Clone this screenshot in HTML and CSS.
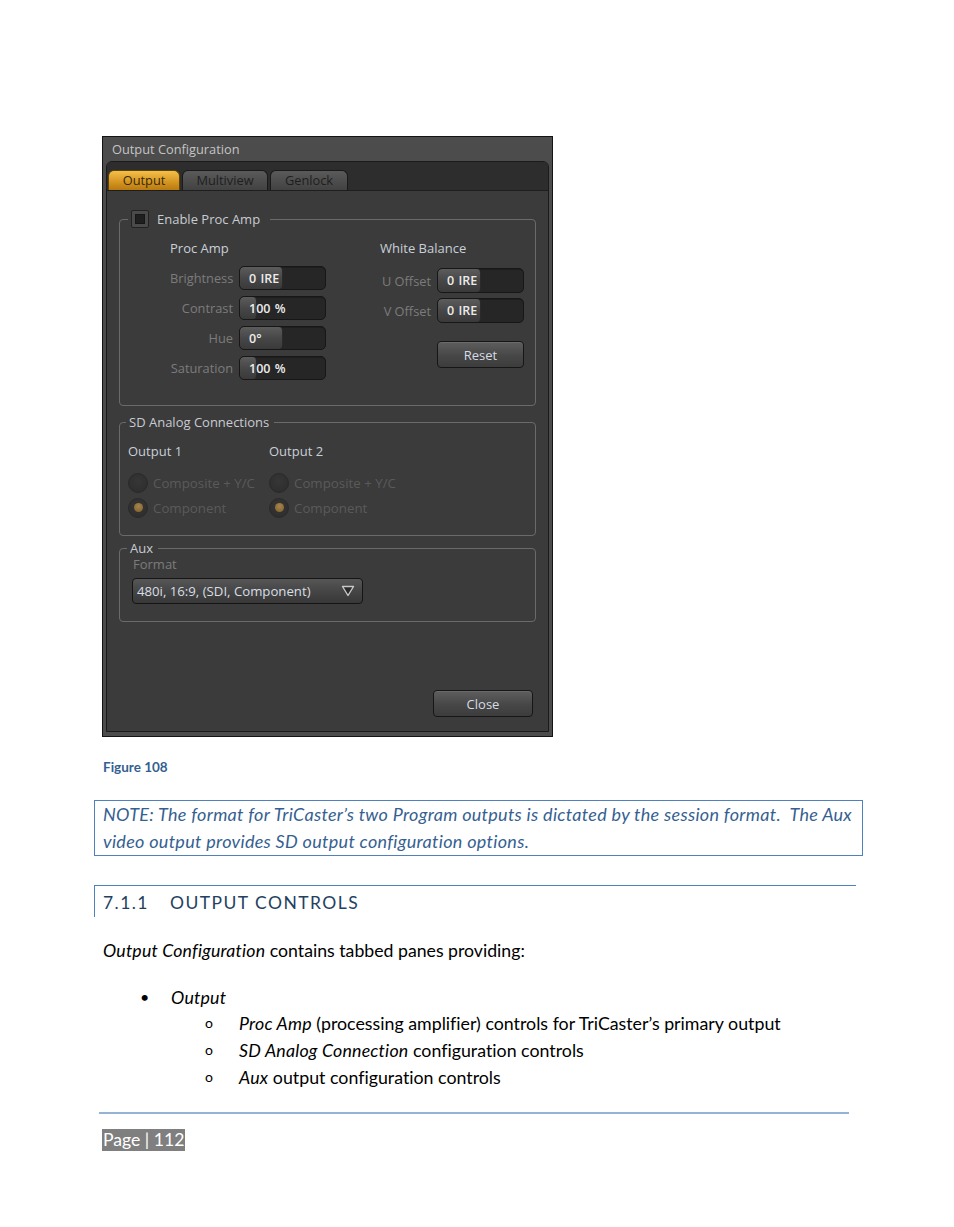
FILE: index.html
```html
<!DOCTYPE html>
<html>
<head>
<meta charset="utf-8">
<link rel="stylesheet" href="styles.css">
</head>
<body>
<div class="page">
  <div class="dialog">
    <div class="dlg-title">Output Configuration</div>
    <div class="panel">
      <div class="tabbar">
        <div class="tab tab-output active">Output</div>
        <div class="tab tab-multi">Multiview</div>
        <div class="tab tab-gen">Genlock</div>
      </div>
      <div class="content">
        <div class="group g1">
          <div class="legend lg1"><span class="check"><span class="check-in"></span></span><span>Enable Proc Amp</span></div>
          <div class="g1-body">
            <div class="col col-left">
              <div class="colhead">Proc Amp</div>
              <div class="rows rows-left">
                <div class="row"><span class="lbl lbl-left">Brightness</span><div class="slider"><div class="fill" style="width:50%"></div><span class="val">0 IRE</span></div></div>
                <div class="row"><span class="lbl lbl-left">Contrast</span><div class="slider"><div class="fill" style="width:20%"></div><span class="val">100 %</span></div></div>
                <div class="row"><span class="lbl lbl-left">Hue</span><div class="slider"><div class="fill" style="width:50%"></div><span class="val">0°</span></div></div>
                <div class="row"><span class="lbl lbl-left">Saturation</span><div class="slider"><div class="fill" style="width:20%"></div><span class="val">100 %</span></div></div>
              </div>
            </div>
            <div class="col col-right">
              <div class="colhead">White Balance</div>
              <div class="rows rows-right">
                <div class="row row-r"><span class="lbl lbl-right">U Offset</span><div class="slider"><div class="fill" style="width:50%"></div><span class="val">0 IRE</span></div></div>
                <div class="row row-r"><span class="lbl lbl-right">V Offset</span><div class="slider"><div class="fill" style="width:50%"></div><span class="val">0 IRE</span></div></div>
              </div>
              <div class="reset-row"><div class="btn btn-reset">Reset</div></div>
            </div>
          </div>
        </div>

        <div class="group g2">
          <div class="legend lg2">SD Analog Connections</div>
          <div class="g2-body">
            <div class="outcol oc1">
              <div class="colhead">Output 1</div>
              <div class="radio-row"><span class="radio"></span><span class="rtext">Composite + Y/C</span></div>
              <div class="radio-row"><span class="radio on"><span class="dot"></span></span><span class="rtext">Component</span></div>
            </div>
            <div class="outcol oc2">
              <div class="colhead">Output 2</div>
              <div class="radio-row"><span class="radio"></span><span class="rtext">Composite + Y/C</span></div>
              <div class="radio-row"><span class="radio on"><span class="dot"></span></span><span class="rtext">Component</span></div>
            </div>
          </div>
        </div>

        <div class="group g3">
          <div class="legend lg3">Aux</div>
          <div class="fmt-label">Format</div>
          <div class="dropdown"><span class="dd-text">480i, 16:9, (SDI, Component)</span><svg class="dd-arrow" width="14" height="12" viewBox="0 0 14 12"><path d="M1.5 1.5 L12.5 1.5 L7 10.5 Z" fill="#2a2a2a" stroke="#c9c9c9" stroke-width="1.4" stroke-linejoin="round"/></svg></div>
        </div>

        <div class="spacer"></div>
        <div class="close-row"><div class="btn btn-close">Close</div></div>
      </div>
    </div>
  </div>

  <div class="caption">Figure 108</div>

  <div class="note">NOTE: The format for TriCaster’s two Program outputs is dictated by the session format.&nbsp; The Aux<br>video output provides SD output configuration options.</div>

  <h3 class="heading"><span class="hnum">7.1.1</span><span class="htext">OUTPUT CONTROLS</span></h3>

  <p class="para"><em>Output Configuration</em> contains tabbed panes providing:</p>

  <div class="list">
    <div class="li li1"><span class="bullet">•</span><em>Output</em></div>
    <div class="li li2"><span class="sub">o</span><span><em>Proc Amp</em> (processing amplifier) controls for TriCaster’s primary output</span></div>
    <div class="li li2"><span class="sub">o</span><span><em>SD Analog Connection</em> configuration controls</span></div>
    <div class="li li2"><span class="sub">o</span><span><em>Aux</em> output configuration controls</span></div>
  </div>

  <div class="footer-line"></div>
  <div class="pagebox">Page | 112</div>
</div>
</body>
</html>
```

FILE: styles.css
```css
* { box-sizing: border-box; }
body { margin: 0; background: #ffffff; font-family: Lato, "Liberation Sans", sans-serif; font-variant-ligatures: none; }
.page { width: 954px; height: 1227px; overflow: hidden; padding-top: 136px; }

/* ---------- dialog ---------- */
.dialog {
  margin-left: 102px;
  width: 451px;
  height: 601px;
  border: 1px solid #141414;
  background: #4c4c4c;
  padding: 0 3px 4px 3px;
  display: flex;
  flex-direction: column;
  font-family: "Open Sans", "Noto Sans", sans-serif;
  font-size: 13px;
}
.dlg-title {
  height: 24px;
  line-height: 25px;
  padding-left: 6px;
  color: #c4c4c4;
  font-size: 12.8px;
}
.panel {
  height: 571px;
  border: 1px solid #1b1b1b;
  border-radius: 6px 6px 0 0;
  background: #3b3b3b;
  display: flex;
  flex-direction: column;
}
.tabbar {
  height: 29px;
  flex: none;
  background: #2d2d2d;
  border-radius: 5px 5px 0 0;
  border-bottom: 1px solid #1e1e1e;
  display: flex;
  align-items: flex-end;
  padding-left: 1px;
  gap: 2px;
}
.tab {
  height: 20px;
  line-height: 19px;
  text-align: center;
  border: 1px solid #1a1a1a;
  border-bottom: none;
  border-radius: 6px 6px 0 0;
  background: linear-gradient(#5a5a5a, #424242);
  color: #1e1e1e;
  font-size: 12.8px;
}
.tab-output { width: 72px; }
.tab-multi { width: 86px; }
.tab-gen { width: 78px; }
.tab.active {
  background: linear-gradient(#f4c04a, #d39420 60%, #b87a12);
  color: #3a2a08;
  border-color: #5b430d;
}
.content {
  flex: 1;
  display: flex;
  flex-direction: column;
  padding: 28px 15px 14px 12px;
  background: #3b3b3b;
}
.group {
  width: 417px;
  border: 1px solid #6a6a6a;
  border-radius: 4px;
  flex: none;
}
.legend {
  display: flex;
  align-items: center;
  width: max-content;
  background: #3b3b3b;
  color: #c8ccd2;
  font-size: 13px;
}
.g1 { height: 187px; }
.lg1 { height: 18px; margin-top: -10px; margin-left: 8px; padding: 0 10px 0 3px; gap: 8px; }
.check {
  width: 18px; height: 18px;
  border: 1px solid #222;
  background: #4a4a4a;
  border-radius: 2px;
  display: flex; align-items: center; justify-content: center;
}
.check-in { width: 10px; height: 10px; background: #1f1f1f; border: 1px solid #161616; }

.g1-body { display: flex; margin-top: 11px; padding-left: 50px; gap: 54px; }
.col { display: flex; flex-direction: column; }
.colhead { height: 18px; line-height: 18px; color: #c8d0d8; font-size: 13px; white-space: nowrap; }
.rows-left { margin-top: 9px; display: flex; flex-direction: column; gap: 6px; }
.rows-right { margin-top: 11px; display: flex; flex-direction: column; gap: 5px; }
.row { display: flex; align-items: center; gap: 6px; height: 24px; }
.row-r { height: 25px; }
.lbl { color: #7c7c7c; text-align: right; white-space: nowrap; font-size: 12.8px; }
.lbl-left { width: 63px; }
.lbl-right { width: 51px; }
.slider {
  width: 87px; height: 100%;
  display: grid;
  border: 1px solid #171717;
  border-radius: 5px;
  background: #262626;
  overflow: hidden;
  box-shadow: inset 0 1px 0 #1e1e1e;
}
.fill, .val { grid-area: 1 / 1; }
.fill {
  height: 100%;
  background: linear-gradient(#5c5c5c, #474747 50%, #3a3a3a);
  border-radius: 4px;
  border-right: 1px solid #2a2a2a;
}
.val {
  align-self: center;
  padding-left: 9px;
  color: #ececec;
  font-weight: 600;
  font-size: 12.5px;
  word-spacing: 1px;
  white-space: nowrap;
}
.reset-row { margin-top: 18px; display: flex; justify-content: flex-end; }
.btn {
  display: flex; align-items: center; justify-content: center;
  border: 1px solid #161616;
  border-radius: 4px;
  background: linear-gradient(#5e5e5e, #474747 55%, #3c3c3c);
  color: #d6dce4;
  font-size: 13px;
  box-shadow: inset 0 1px 0 #6a6a6a;
}
.btn-reset { width: 87px; height: 27px; }

.g2 { height: 114px; margin-top: 16px; }
.lg2 { height: 18px; margin-top: -10px; margin-left: 6px; padding: 0 5px 0 3px; }
.g2-body { display: flex; padding-left: 8px; margin-top: 11px; }
.outcol { display: flex; flex-direction: column; }
.oc1 { width: 141px; }
.outcol .colhead { margin-bottom: 10px; }
.radio-row { display: flex; align-items: center; height: 25px; gap: 5px; }
.radio {
  width: 20px; height: 20px; border-radius: 50%;
  border: 1px solid #2a2a2a;
  background: radial-gradient(circle at 50% 40%, #363636, #2c2c2c);
  display: flex; align-items: center; justify-content: center;
  flex: none;
}
.dot { width: 9px; height: 9px; border-radius: 50%; background: radial-gradient(circle at 50% 35%, #a8844a, #7c5f2c); }
.rtext { color: #5a5a5a; font-size: 13.3px; white-space: nowrap; }

.g3 { height: 74px; margin-top: 12px; }
.lg3 { height: 16px; margin-top: -9px; margin-left: 7px; padding: 0 5px 0 3px; }
.fmt-label { height: 16px; line-height: 16px; margin-left: 13px; color: #7c7c7c; font-size: 13px; }
.dropdown {
  margin-top: 6px;
  margin-left: 12px;
  width: 231px; height: 26px;
  border: 1px solid #151515;
  border-radius: 4px;
  background: linear-gradient(#565656, #444444 55%, #383838);
  display: flex; align-items: center; justify-content: space-between;
  padding: 0 7px 0 4px;
  color: #d8dee6;
  font-size: 13.2px;
}
.spacer { flex: 1; }
.close-row { display: flex; justify-content: flex-end; }
.btn-close { width: 100px; height: 27px; }

/* ---------- document ---------- */
.caption {
  margin: 22px 0 0 103px;
  height: 16px; line-height: 16px;
  font-size: 13.5px; font-weight: 700;
  color: #365f91;
}
.note {
  margin: 25px 0 0 94px;
  width: 769px;
  height: 56px;
  border: 1px solid #4f81bd;
  padding: 0 8px;
  line-height: 26.5px;
  font-size: 18px;
  letter-spacing: 0.3px;
  font-style: italic;
  color: #365f91;
  white-space: nowrap;
}
.heading {
  margin: 29px 0 0 94px;
  width: 762px;
  height: 32px;
  border-top: 1px solid #4f81bd;
  border-left: 1px solid #4f81bd;
  padding: 2px 0 0 8px;
  line-height: 30px;
  font-size: 17.5px;
  font-weight: 400;
  letter-spacing: 1.45px;
  color: #243f60;
  display: flex;
}
.hnum { width: 67px; }
.para {
  margin: 24px 0 0 103px;
  line-height: 20px;
  font-size: 17.7px;
  color: #000;
}
em { letter-spacing: 0.2px; }
.list { margin-top: 22.7px; font-size: 17.8px; line-height: 26.8px; color: #000; }
.li { display: flex; white-space: nowrap; }
.li1 { padding-left: 140px; }
.bullet { width: 31px; font-size: 16px; }
.li2 { padding-left: 205px; }
.sub { width: 34px; font-size: 14px; }
.footer-line { margin: 21px 0 0 99px; width: 750px; height: 2px; background: #95b3d7; }
.pagebox {
  margin: 15px 0 0 102px;
  width: 83px; height: 22px;
  background: #7f7f7f;
  color: #ffffff;
  font-size: 17.6px;
  line-height: 22px;
  padding-left: 1px;
  white-space: nowrap;
  overflow: hidden;
}
```
